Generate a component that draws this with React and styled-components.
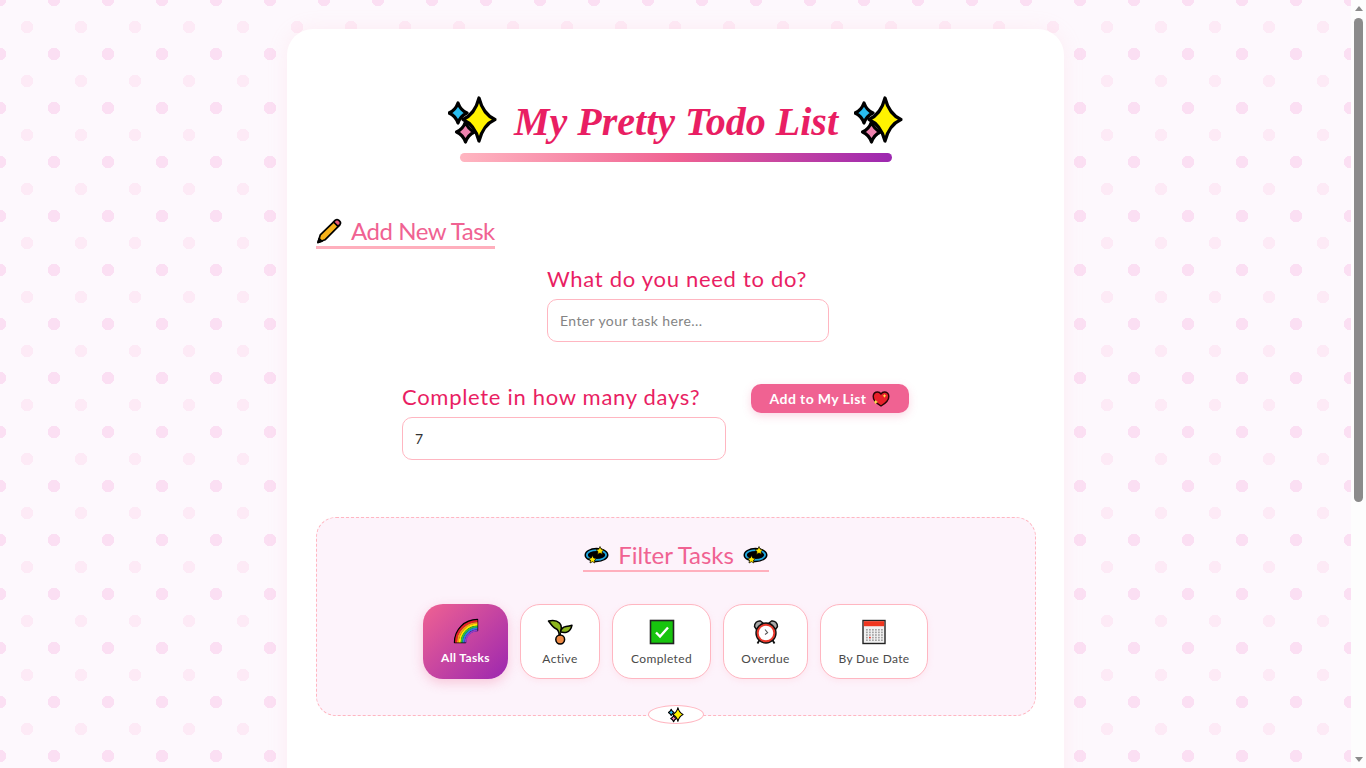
import React from 'react'
import styled, { createGlobalStyle } from 'styled-components'

const GlobalStyle = createGlobalStyle`
  * {
    box-sizing: border-box;
  }

  body {
    margin: 0;
    font-family: "Lato", "Noto Sans", sans-serif;
    background-color: #fdf8fd;
    background-image:
      radial-gradient(circle, #fbdff3 6px, transparent 6.5px),
      radial-gradient(circle, #fdeaf6 6px, transparent 6.5px);
    background-size: 54px 54px;
    background-position: -27px -27px, 0 0;
  }
`

const Page = styled.div`
  padding: 29px 15px 29px 0;
`

const ScrollRail = styled.div`
  position: fixed;
  top: 0;
  right: 0;
  bottom: 0;
  display: flex;
  flex-direction: column;
  align-items: center;
  width: 15px;
  padding: 6px 0;
  background: #fdfdfd;
`

const ScrollArrow = styled.div`
  width: 0;
  height: 0;
  border-left: 4.5px solid transparent;
  border-right: 4.5px solid transparent;
  border-${(p) => (p.$down ? 'top' : 'bottom')}: 5px solid #8b8b8b;
  margin-top: ${(p) => (p.$down ? 'auto' : '0')};
`

const ScrollThumb = styled.div`
  width: 9px;
  height: 484px;
  margin-top: 7px;
  border-radius: 5px;
  background: #8b8b8b;
`

const Card = styled.main`
  width: 777px;
  min-height: 1106px;
  margin: 0 auto;
  padding: 67px 28px 30px 29px;
  background: #fff;
  border-radius: 26px;
  box-shadow: 0 0 20px rgba(255, 182, 193, 0.16);
`

const Title = styled.h1`
  display: flex;
  justify-content: center;
  align-items: center;
  gap: 16px;
  height: 50px;
  margin: 0;
  font-family: "Liberation Serif", serif;
  font-style: italic;
  font-weight: 700;
  font-size: 40px;
  color: #e91e63;
`

const TitleBar = styled.div`
  width: 432px;
  height: 9px;
  margin: 7px auto 0;
  border-radius: 5px;
  background: linear-gradient(90deg, #ffb6c1, #f06292 50%, #9c27b0);
`

const SectionTitle = styled.h2`
  display: inline-flex;
  align-items: center;
  gap: ${(p) => p.$gap}px;
  margin: 0;
  padding: 0 ${(p) => p.$side || 0}px 0;
  border-bottom: ${(p) => p.$rule}px solid #ffafbd;
  font-size: 24px;
  font-weight: 400;
  line-height: 30px;
  letter-spacing: ${(p) => p.$spacing}px;
  color: #f06292;
`

const AddSection = styled.section`
  margin-top: 54px;
`

const TaskRow = styled.div`
  display: flex;
  align-items: flex-start;
  gap: 25px;
  padding-left: ${(p) => p.$indent}px;
  margin-top: ${(p) => p.$top}px;
`

const Field = styled.div`
  display: flex;
  flex-direction: column;
  gap: 8px;
  width: ${(p) => p.$width}px;
`

const Label = styled.label`
  font-size: 22px;
  line-height: 25px;
  letter-spacing: 0.7px;
  white-space: nowrap;
  color: #e91e63;
`

const Input = styled.input`
  width: 100%;
  height: 43px;
  padding: 0 12px;
  border: 1px solid #ffb6c1;
  border-radius: 10px;
  outline: none;
  font-family: inherit;
  font-size: 14px;
  letter-spacing: 0.4px;
  color: #333;

  &::placeholder {
    color: #848484;
  }
`

const AddButton = styled.button`
  display: flex;
  align-items: center;
  justify-content: center;
  gap: 6px;
  width: 158px;
  height: 29px;
  padding: 0;
  border: 0;
  border-radius: 10px;
  background: #f06292;
  box-shadow: 0 3px 8px rgba(240, 98, 146, 0.25);
  font-family: inherit;
  font-size: 14px;
  font-weight: 700;
  letter-spacing: 0.4px;
  color: #fff;
`

const FilterPanel = styled.section`
  position: relative;
  height: 199px;
  margin-top: 57px;
  padding-top: 22px;
  border: 1px dashed #ffb6c1;
  border-radius: 20px;
  background: #fdf3fb;
`

const FilterHead = styled.div`
  display: flex;
  justify-content: center;
`

const FilterRow = styled.div`
  display: flex;
  justify-content: center;
  gap: 12px;
  margin-top: 32px;
  padding-right: 1px;
`

const FilterButton = styled.button`
  display: flex;
  flex-direction: column;
  align-items: center;
  gap: 6px;
  width: ${(p) => p.$width}px;
  height: 75px;
  padding: 14px 0 0;
  border: ${(p) => (p.$active ? '0' : '1px solid #ffb6c1')};
  border-radius: 20px;
  background: ${(p) => (p.$active ? 'linear-gradient(135deg, #f06292, #9c27b0)' : '#fff')};
  box-shadow: ${(p) =>
    p.$active ? '0 4px 12px rgba(240, 98, 146, 0.3)' : '0 2px 6px rgba(255, 182, 193, 0.2)'};
  font-family: inherit;
  font-size: 12px;
  font-weight: ${(p) => (p.$active ? 700 : 400)};
  letter-spacing: 0.35px;
  color: ${(p) => (p.$active ? '#fff' : '#4a4a4a')};
`

const Badge = styled.div`
  position: absolute;
  left: 331px;
  bottom: -9px;
  display: flex;
  align-items: center;
  justify-content: center;
  width: 56px;
  height: 19px;
  border: 1px solid #ffb6c1;
  border-radius: 50%;
  background: #fff;
`

const starPath = (cx, cy, w, h, k = 0.22) => {
  const kx = w * k
  const ky = h * k
  return `M${cx} ${cy - h}Q${cx + kx} ${cy - ky} ${cx + w} ${cy}Q${cx + kx} ${cy + ky} ${cx} ${cy + h}Q${cx - kx} ${cy + ky} ${cx - w} ${cy}Q${cx - kx} ${cy - ky} ${cx} ${cy - h}Z`
}

function Sparkles({ size = 50 }) {
  return (
    <svg width={size} height={size} viewBox="0 0 50 50" fill="none" stroke="#000" strokeWidth="3.2" strokeLinejoin="round">
      <path d={starPath(10, 17, 9, 10, 0.28)} fill="#29bdf0" />
      <path d={starPath(17.5, 36, 9, 10, 0.28)} fill="#ee82ae" />
      <path d={starPath(31, 23.5, 16, 21.5, 0.25)} fill="#fff200" />
    </svg>
  )
}

function Pencil() {
  return (
    <svg width="26" height="26" viewBox="0 0 26 26" strokeLinejoin="round" stroke="#000" strokeWidth="1.7">
      <path d="M2 24.5 4.3 16.8 19 2.6 23.6 7.2 9 21.8Z" fill="#f7b21a" />
      <path d="M17.6 4 19.4 2.2C20.4 1.4 21.6 1.4 22.6 2.2L23.8 3.4C24.7 4.4 24.7 5.6 23.8 6.6L22 8.4Z" fill="#ea5a77" />
      <path d="M2 24.5 3.2 20.5 6 23.3Z" fill="#000" />
    </svg>
  )
}

function Heart() {
  return (
    <svg width="18" height="16" viewBox="0 0 18 16" style={{ display: 'block' }}>
      <path d="M9 15C4 12 1 9 1.2 5.2 1.4 2.6 3.4 1 5.6 1 7 1 8.2 1.8 9 3 9.8 1.8 11 1 12.4 1 14.6 1 16.8 2.6 16.8 5.2 17 9 14 12 9 15Z" fill="#e8202a" stroke="#2a0505" strokeWidth="1.4" strokeLinejoin="round" />
      <path d={starPath(12.5, 4.8, 1.9, 1.9)} fill="#ffe14a" />
      <path d={starPath(3.8, 11, 2.2, 2.2)} fill="#ffe14a" />
    </svg>
  )
}

function Orbit() {
  return (
    <svg width="25" height="20" viewBox="0 0 25 20" style={{ display: 'block' }}>
      <ellipse cx="12.5" cy="10" rx="12" ry="7.2" fill="#000" />
      <ellipse cx="12.5" cy="10" rx="9.6" ry="4.9" fill="none" stroke="#1fa8e0" strokeWidth="1.8" />
      <path d="M16 1.5 17.3 4.2 20.1 4.6 18 6.6 18.5 9.4 16 8 13.5 9.4 14 6.6 11.9 4.6 14.7 4.2Z" fill="#ffe600" stroke="#000" strokeWidth="0.7" />
      <path d="M8.5 10.5 9.7 13 12.5 13.4 10.5 15.3 11 18 8.5 16.7 6 18 6.5 15.3 4.5 13.4 7.3 13Z" fill="#ffe600" stroke="#000" strokeWidth="0.7" />
    </svg>
  )
}

function RainbowIcon() {
  const bands = ['#e8202a', '#f7931e', '#ffe600', '#2fbf3a', '#2a7de1', '#8e3ec9']
  return (
    <svg width="26" height="26" viewBox="0 0 26 26" fill="none">
      <path d="M1.5 24.5C1.5 11.5 11.5 1.5 24.5 1.5V12.5C17.5 12.5 12.5 17.5 12.5 24.5Z" fill="#000" stroke="#000" strokeWidth="1.4" strokeLinejoin="round" />
      {bands.map((color, i) => {
        const r = 21.5 - i * 1.9
        return <path key={color} d={`M${24.5 - r} 24.5A${r} ${r} 0 0 1 24.5 ${24.5 - r}`} stroke={color} strokeWidth="2" />
      })}
    </svg>
  )
}

function Sprout() {
  return (
    <svg width="26" height="26" viewBox="0 0 26 26" stroke="#000" strokeWidth="1.5" strokeLinejoin="round">
      <path d="M12 18C12.5 14 12 11 8.5 9.5 6 8.5 4.5 6 1.5 2 5 1.2 10 1.5 12.5 4 14.5 6 14.8 9 13.6 13" fill="#8db51e" />
      <path d="M13.6 13C14 10 16.5 8 19 7.5 21 7.2 23 6.8 25 6.2 24.4 9.5 22.5 12.5 19.5 13.2 17.5 13.6 15.5 13.5 13.6 13Z" fill="#8db51e" />
      <path d="M13.2 13.5 13.3 17" fill="none" />
      <circle cx="13.2" cy="20.5" r="4.4" fill="#ee8a45" />
    </svg>
  )
}

function Check() {
  return (
    <svg width="26" height="26" viewBox="0 0 26 26">
      <rect x="1.5" y="1.5" width="23" height="23" fill="#17c40e" stroke="#222" strokeWidth="1.6" />
      <path d="M7 13.5 11 17.5 19 8.5" fill="none" stroke="#fff" strokeWidth="2.4" />
    </svg>
  )
}

function Clock() {
  return (
    <svg width="26" height="26" viewBox="0 0 26 26" stroke="#111" strokeWidth="1.4">
      <path d="M1.5 7.5C1.5 4 4 1.5 7.5 2L10 4 3.5 10.5Z" fill="#a8a8a8" strokeLinejoin="round" />
      <path d="M24.5 7.5C24.5 4 22 1.5 18.5 2L16 4 22.5 10.5Z" fill="#a8a8a8" strokeLinejoin="round" />
      <path d="M6.5 21 4.5 24.5M19.5 21 21.5 24.5" fill="none" strokeWidth="1.8" />
      <circle cx="13" cy="14" r="10" fill="#e8372a" />
      <circle cx="13" cy="14" r="7.3" fill="#fff" stroke="none" />
      <path d="M12 10.5 14.6 13.6 12 15.5" fill="none" stroke="#555" strokeWidth="1.1" />
    </svg>
  )
}

function Calendar() {
  const dots = []
  for (let y = 0; y < 5; y++) {
    for (let x = 0; x < 6; x++) {
      dots.push(
        <rect key={`${x}-${y}`} x={5 + x * 3} y={10 + y * 2.6} width="1.8" height="1.6" fill={x === 1 && y === 3 ? '#e8372a' : '#a4a4a4'} />
      )
    }
  }
  return (
    <svg width="26" height="26" viewBox="0 0 26 26">
      <rect x="2" y="1.5" width="22" height="23" fill="#f1f1f1" stroke="#222" strokeWidth="1.4" />
      <rect x="2.8" y="2.2" width="20.4" height="5" fill="#f0361f" />
      {dots}
    </svg>
  )
}

const filters = [
  { label: 'All Tasks', width: 85, Icon: RainbowIcon, active: true },
  { label: 'Active', width: 80, Icon: Sprout },
  { label: 'Completed', width: 99, Icon: Check },
  { label: 'Overdue', width: 85, Icon: Clock },
  { label: 'By Due Date', width: 108, Icon: Calendar },
]

export default function App() {
  return (
    <Page>
      <GlobalStyle />
      <Card>
        <Title>
          <Sparkles />
          <span>My Pretty Todo List</span>
          <Sparkles />
        </Title>
        <TitleBar />

        <AddSection>
          <SectionTitle $gap={9} $rule={3} $spacing={-0.45}>
            <Pencil />
            Add New Task
          </SectionTitle>
          <TaskRow $indent={231} $top={17}>
            <Field $width={282}>
              <Label htmlFor="task">What do you need to do?</Label>
              <Input id="task" type="text" placeholder="Enter your task here..." />
            </Field>
          </TaskRow>
          <TaskRow $indent={86} $top={42}>
            <Field $width={324}>
              <Label htmlFor="days">Complete in how many days?</Label>
              <Input id="days" type="number" defaultValue="7" />
            </Field>
            <AddButton type="button">
              Add to My List
              <Heart />
            </AddButton>
          </TaskRow>
        </AddSection>

        <FilterPanel>
          <FilterHead>
            <SectionTitle $gap={9} $side={1} $rule={2} $spacing={-0.05}>
              <Orbit />
              Filter Tasks
              <Orbit />
            </SectionTitle>
          </FilterHead>
          <FilterRow>
            {filters.map(({ label, width, Icon, active }) => (
              <FilterButton key={label} type="button" $width={width} $active={active}>
                <Icon />
                {label}
              </FilterButton>
            ))}
          </FilterRow>
          <Badge>
            <Sparkles size={16} />
          </Badge>
        </FilterPanel>
      </Card>
      <ScrollRail>
        <ScrollArrow />
        <ScrollThumb />
        <ScrollArrow $down />
      </ScrollRail>
    </Page>
  )
}
